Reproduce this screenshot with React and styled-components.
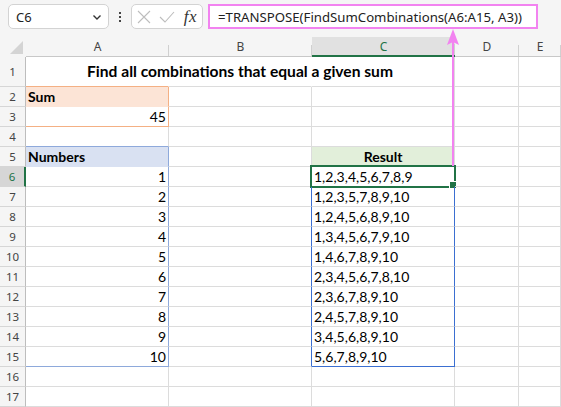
import React from 'react';
import styled, { createGlobalStyle } from 'styled-components';

const GREEN = '#217346';
const GRID = '#dcdcdc';
const PINK = '#f283f0';
const CHROME = '#f5f5f5';
const ORANGE = '#f4b084';
const PEACH = '#fce4d6';
const LBLUE = '#8ea9db';
const LBLUE_FILL = '#d9e1f2';
const LGREEN_FILL = '#e2efda';
const SPILL = '#3b6fd1';

const Global = createGlobalStyle`
  html, body { margin: 0; padding: 0; background: ${CHROME}; }
  body { overflow: hidden; }
`;

const Window = styled.div`
  position: relative;
  width: 561px;
  height: 407px;
  background: ${CHROME};
  display: flex;
  flex-direction: column;
  overflow: hidden;
  font-family: "Noto Sans", "Open Sans", sans-serif;
`;

const FormulaBar = styled.div`
  height: 37px;
  box-sizing: border-box;
  display: flex;
  align-items: flex-start;
  padding: 4px 0 0 8px;
`;

const Box = styled.div`
  box-sizing: border-box;
  height: 25px;
  background: #fff;
  border: 1px solid #d3d3d3;
  border-radius: 5px;
  display: flex;
  align-items: center;
`;

const NameBox = styled(Box)`
  width: 101px;
  justify-content: space-between;
  padding: 0 6px 0 7px;
  font-size: 13px;
  color: #222;
`;

const Grip = styled.div`
  width: 22px;
  height: 25px;
  display: flex;
  flex-direction: column;
  align-items: center;
  justify-content: center;
  gap: 2px;
`;

const Dot = styled.span`
  width: 2px;
  height: 2px;
  background: #444;
`;

const FxBox = styled(Box)`
  width: 72px;
  padding: 0 5px 0 5px;
  gap: 8px;
`;

const FxLabel = styled.span`
  font-family: "Liberation Serif", "DejaVu Serif", serif;
  font-style: italic;
  font-size: 17px;
  color: #333;
  margin-left: auto;
  letter-spacing: 0.5px;
`;

const FormulaInput = styled.div`
  box-sizing: border-box;
  margin-left: 5px;
  width: 330px;
  height: 25px;
  border: 2px solid ${PINK};
  background: #fff;
  display: flex;
  align-items: center;
  padding-left: 8px;
  font-size: 13.2px;
  color: #222;
  white-space: nowrap;
`;

const Sheet = styled.div`
  display: grid;
  grid-template-columns: 26px 143px 143px 143px 64px 1fr;
  grid-template-rows: 20px 30px repeat(16, 20px);
  background: #fff;
`;

const Corner = styled.div`
  background: ${CHROME};
  position: relative;
  &::after {
    content: '';
    position: absolute;
    right: 3px;
    bottom: 3px;
    width: 0;
    height: 0;
    border-left: 13px solid transparent;
    border-bottom: 13px solid #d4d4d4;
  }
`;

const ColHeader = styled.div`
  box-sizing: border-box;
  position: relative;
  background: ${(p) => (p.$active ? '#e1e1e1' : CHROME)};
  border-bottom: ${(p) => (p.$active ? `2px solid ${GREEN}` : '1px solid #c8c8c8')};
  color: ${(p) => (p.$active ? GREEN : '#444')};
  font-size: 12px;
  display: flex;
  align-items: center;
  justify-content: center;
  padding-top: ${(p) => (p.$active ? '1px' : '0')};
  &::after {
    content: '';
    position: absolute;
    right: 0;
    bottom: 0;
    width: 1px;
    height: 11px;
    background: #d0d0d0;
  }
`;

const RowHeader = styled.div`
  box-sizing: border-box;
  background: ${(p) => (p.$active ? '#d6d6d6' : CHROME)};
  border-right: ${(p) => (p.$active ? `2px solid ${GREEN}` : '1px solid #bdbdbd')};
  border-bottom: 1px solid #d6d6d6;
  color: ${(p) => (p.$active ? GREEN : '#444')};
  font-size: 11.5px;
  display: flex;
  align-items: center;
  justify-content: center;
`;

const Cell = styled.div`
  box-sizing: border-box;
  position: relative;
  z-index: ${(p) => (p.$front ? 2 : 'auto')};
  background: ${(p) => p.$bg || 'transparent'};
  border-right: 1px solid ${(p) => p.$r || GRID};
  border-bottom: 1px solid ${(p) => p.$b || GRID};
  display: flex;
  align-items: flex-end;
  justify-content: ${(p) =>
    p.$align === 'right' ? 'flex-end' : p.$align === 'center' ? 'center' : 'flex-start'};
  padding: 0 2px ${(p) => p.$pb || 1}px;
  font-family: "Lato", "Liberation Sans", sans-serif;
  font-size: ${(p) => p.$size || 14}px;
  line-height: 17px;
  font-weight: ${(p) => (p.$bold ? 700 : 400)};
  color: #000;
  white-space: nowrap;
`;

const ActiveFrame = styled.div`
  position: absolute;
  left: -2px;
  top: -2px;
  width: 146px;
  height: 23px;
  box-sizing: border-box;
  border: 2px solid ${GREEN};
  pointer-events: none;
`;

const FillHandle = styled.div`
  position: absolute;
  right: -3px;
  bottom: -3px;
  width: 6px;
  height: 6px;
  background: ${GREEN};
  border: 1px solid #fff;
`;

const Arrow = styled.svg`
  position: absolute;
  left: 445px;
  top: 28px;
  z-index: 5;
  overflow: visible;
`;

const COLS = ['A', 'B', 'C', 'D', 'E'];

const COMBOS = [
  '1,2,3,4,5,6,7,8,9',
  '1,2,3,5,7,8,9,10',
  '1,2,4,5,6,8,9,10',
  '1,3,4,5,6,7,9,10',
  '1,4,6,7,8,9,10',
  '2,3,4,5,6,7,8,10',
  '2,3,6,7,8,9,10',
  '2,4,5,7,8,9,10',
  '3,4,5,6,8,9,10',
  '5,6,7,8,9,10',
];

function cellsFor(row) {
  const c = {};
  if (row === 1) {
    c.A = { r: 'transparent', b: ORANGE };
    c.B = {
      r: 'transparent',
      text: 'Find all combinations that equal a given sum',
      bold: true,
      align: 'center',
      front: true,
      pb: 6,
      size: 15.6,
    };
  }
  if (row === 2) c.A = { bg: PEACH, r: ORANGE, b: PEACH, text: 'Sum', bold: true };
  if (row === 3) c.A = { r: ORANGE, b: ORANGE, text: '45', align: 'right' };
  if (row === 4) c.A = { b: LBLUE };
  if (row === 5) {
    c.A = { bg: LBLUE_FILL, r: LBLUE, b: LBLUE_FILL, text: 'Numbers', bold: true };
    c.C = { bg: LGREEN_FILL, b: SPILL, text: 'Result', bold: true, align: 'center' };
  }
  if (row >= 6 && row <= 15) {
    const last = row === 15;
    c.A = { r: LBLUE, b: last ? LBLUE : GRID, text: String(row - 5), align: 'right' };
    c.B = { r: SPILL };
    c.C = { r: SPILL, b: last ? SPILL : GRID, text: COMBOS[row - 6], active: row === 6 };
  }
  return c;
}

function Chevron() {
  return (
    <svg width="10" height="10" viewBox="0 0 10 10">
      <path d="M1.5 3.5 L5 7 L8.5 3.5" fill="none" stroke="#333" strokeWidth="1.4" />
    </svg>
  );
}

function CancelIcon() {
  return (
    <svg width="14" height="14" viewBox="0 0 14 14">
      <path d="M1 1 L13 13 M13 1 L1 13" stroke="#bdbdbd" strokeWidth="1.1" fill="none" />
    </svg>
  );
}

function CheckIcon() {
  return (
    <svg width="16" height="14" viewBox="0 0 16 14">
      <path d="M1 7 L6 12 L15 2" stroke="#bdbdbd" strokeWidth="1.1" fill="none" />
    </svg>
  );
}

export default function App() {
  const rows = Array.from({ length: 17 }, (_, i) => i + 1);
  return (
    <Window>
      <Global />
      <FormulaBar>
        <NameBox>
          <span>C6</span>
          <Chevron />
        </NameBox>
        <Grip>
          <Dot />
          <Dot />
          <Dot />
        </Grip>
        <FxBox>
          <CancelIcon />
          <CheckIcon />
          <FxLabel>fx</FxLabel>
        </FxBox>
        <FormulaInput>=TRANSPOSE(FindSumCombinations(A6:A15, A3))</FormulaInput>
      </FormulaBar>
      <Sheet>
        <Corner />
        {COLS.map((col) => (
          <ColHeader key={col} $active={col === 'C'}>
            {col}
          </ColHeader>
        ))}
        {rows.map((row) => {
          const cells = cellsFor(row);
          return (
            <React.Fragment key={row}>
              <RowHeader $active={row === 6}>{row}</RowHeader>
              {COLS.map((col) => {
                const d = cells[col] || {};
                return (
                  <Cell
                    key={col}
                    $bg={d.bg}
                    $r={d.r}
                    $b={d.b}
                    $bold={d.bold}
                    $align={d.align}
                    $front={d.front}
                    $pb={d.pb}
                    $size={d.size}
                  >
                    {d.text}
                    {d.active && (
                      <ActiveFrame>
                        <FillHandle />
                      </ActiveFrame>
                    )}
                  </Cell>
                );
              })}
            </React.Fragment>
          );
        })}
      </Sheet>
      <Arrow width="16" height="140" viewBox="0 0 16 140">
        <line x1="8" y1="6" x2="8" y2="138" stroke={PINK} strokeWidth="2" />
        <polygon points="8,1 2,17 8,14 14,17" fill={PINK} />
      </Arrow>
    </Window>
  );
}
